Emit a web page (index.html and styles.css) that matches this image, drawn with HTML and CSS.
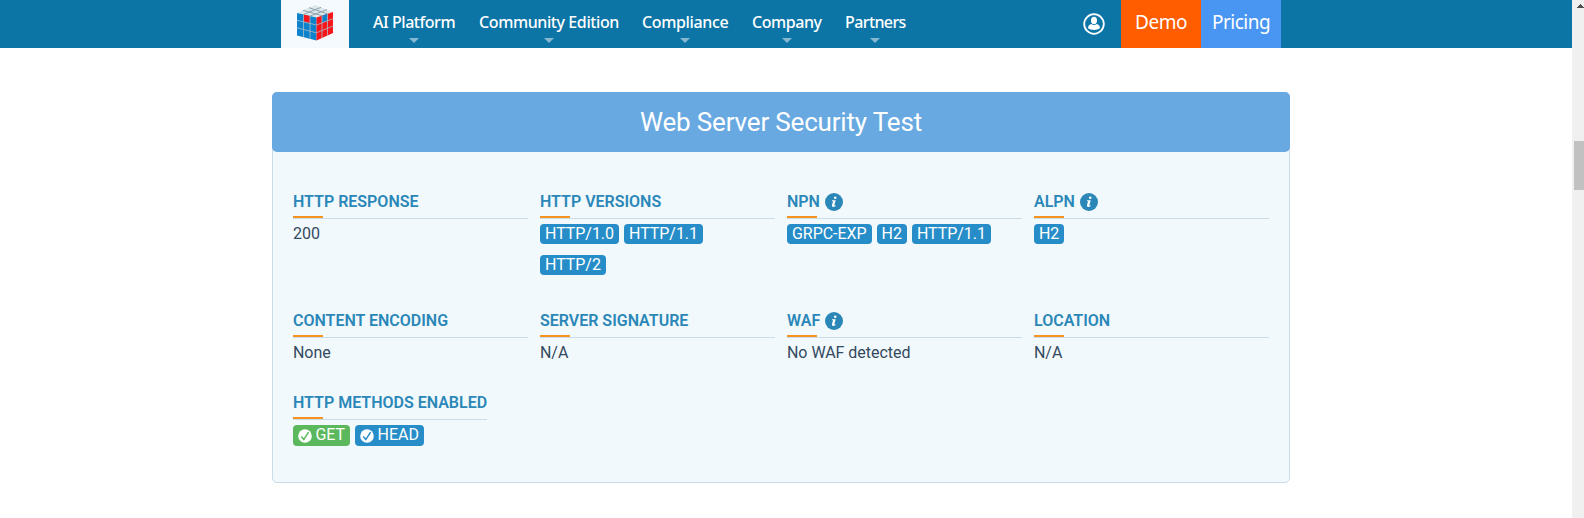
FILE: index.html
```html
<!DOCTYPE html>
<html lang="en">
<head>
<meta charset="utf-8">
<title>Web Server Security Test</title>
<link rel="stylesheet" href="styles.css">
</head>
<body>
<svg class="defs" width="0" height="0">
  <symbol id="info" viewBox="0 0 18 18"><circle cx="9" cy="9" r="9" fill="#2a87b7"/><circle cx="10.2" cy="4.8" r="1.3" fill="#fff"/><path d="M7.1 7.3H10.7L9.3 12.2Q9.2 12.8 10.7 12.2V13Q9.2 14 8 13.9Q6.6 13.7 7 12.1L8.1 8.3H6.9Z" fill="#fff"/></symbol>
  <symbol id="check" viewBox="0 0 14 14"><circle cx="7" cy="7" r="6.8" fill="#fff"/><path d="M3.3 7.6L5.8 10.6L10.6 3.2" fill="none" stroke="currentColor" stroke-width="1.5"/></symbol>
</svg>
<header class="topbar">
  <a class="logo">
    <svg width="38" height="37" viewBox="0 0 38 37">
      <path d="M1 8L19 0L37 7L20.5 12.5Z" fill="#dce8ec"/>
      <path d="M1 8L20.5 12.5V35.5L1 30.5Z" fill="#0c82cd"/>
      <path d="M20.5 12.5L37 7V28L20.5 35.5Z" fill="#f9151b"/>
      <path d="M7.5 9.5L14 11V18L7.5 16.5Z" fill="#f9151b"/>
      <path d="M26 10.7L31.5 8.8V15.5L26 17.7Z" fill="#0c82cd"/>
      <path d="M7 5.3L26 10.7M13 2.7L31.5 8.8M7.5 9.5L25 2.3M14 11L31 4.7" fill="none" stroke="#8fa3aa" stroke-width="1"/>
      <path d="M1 15.3L20.5 20L37 13.7M1 22.8L20.5 27.8L37 21M7.5 9.5V32M14 11V33.7M26 10.7V33M31.5 8.8V30.5" fill="none" stroke="#a9bcc5" stroke-width=".8"/>
    </svg>
  </a>
  <nav class="nav">
    <a class="nav-item platform">AI Platform</a>
    <a class="nav-item community">Community Edition</a>
    <a class="nav-item compliance">Compliance</a>
    <a class="nav-item company">Company</a>
    <a class="nav-item partners">Partners</a>
  </nav>
  <svg class="user" width="22" height="22" viewBox="0 0 22 22"><circle cx="11" cy="11" r="9.8" fill="none" stroke="#fff" stroke-width="1.8"/><ellipse cx="11" cy="7.5" rx="3" ry="3.7" fill="#fff"/><path d="M5 15.2Q5.2 11.6 8.5 11.1Q11 13.3 13.5 11.1Q16.8 11.6 17 15.2Q14.8 17 11 17Q7.2 17 5 15.2Z" fill="#fff"/></svg>
  <a class="action demo">Demo</a>
  <a class="action pricing">Pricing</a>
</header>
<main class="card">
  <h1 class="card-title">Web Server Security Test</h1>
  <div class="grid">
    <section><h2 class="label">HTTP RESPONSE</h2><div class="value">200</div></section>
    <section><h2 class="label">HTTP VERSIONS</h2><div class="value tags tall"><span class="tag">HTTP/1.0</span><span class="tag">HTTP/1.1</span><span class="tag">HTTP/2</span></div></section>
    <section><h2 class="label">NPN<svg class="info"><use href="#info"/></svg></h2><div class="value tags"><span class="tag">GRPC-EXP</span><span class="tag">H2</span><span class="tag">HTTP/1.1</span></div></section>
    <section><h2 class="label">ALPN<svg class="info"><use href="#info"/></svg></h2><div class="value tags"><span class="tag">H2</span></div></section>
    <section><h2 class="label">CONTENT ENCODING</h2><div class="value">None</div></section>
    <section><h2 class="label">SERVER SIGNATURE</h2><div class="value">N/A</div></section>
    <section><h2 class="label">WAF<svg class="info"><use href="#info"/></svg></h2><div class="value">No WAF detected</div></section>
    <section><h2 class="label">LOCATION</h2><div class="value">N/A</div></section>
    <section class="methods"><h2 class="label">HTTP METHODS ENABLED</h2><div class="value tags"><span class="tag method get"><svg class="check"><use href="#check"/></svg>GET</span><span class="tag method"><svg class="check"><use href="#check"/></svg>HEAD</span></div></section>
  </div>
</main>
<aside class="scrollbar"><svg class="scroll-up" width="7" height="4" viewBox="0 0 7 4" shape-rendering="crispEdges"><path d="M0 3H7V4H0ZM1 2H6V3H1ZM2 1H5V2H2ZM3 0H4V1H3Z" fill="#505050"/></svg><div class="thumb"></div></aside>
</body>
</html>
```
FILE: styles.css
```css
* { box-sizing: border-box; }
body { margin: 0; height: 518px; overflow: hidden; background: #fff; font: 16px/24px Roboto, sans-serif; color: #34495e; }
.defs { position: absolute; }
.topbar { display: flex; align-items: flex-start; width: 1572px; height: 48px; padding-left: 281px; background: #0c75a6; color: #fff; font-family: "Noto Sans", sans-serif; }
.logo { width: 68px; height: 48px; padding: 5px 0 0 15px; background: #f5fafe; }
.logo svg { display: block; }
.nav { display: flex; gap: 24px; width: 732px; padding-left: 24px; }
.nav-item { position: relative; height: 48px; font-size: 16px; font-weight: 500; line-height: 45px; white-space: nowrap; letter-spacing: -.45px; }
.nav-item::after { content: ""; position: absolute; left: 50%; top: 38px; margin-left: -5px; border: 5px solid transparent; border-top-color: #86b9d1; border-bottom: 0; }
.platform { width: 82px; }
.community { width: 139px; letter-spacing: -.4px; }
.compliance { width: 86px; letter-spacing: -.35px; }
.company { width: 69px; }
.partners { width: 60px; letter-spacing: -.6px; }
.user { width: 22px; margin: 13px -2px 0 2px; }
.action { width: 80px; height: 48px; text-align: center; font-size: 19px; line-height: 45px; letter-spacing: -.5px; }
.demo { margin-left: 18px; background: #ff5d00; }
.pricing { background: #4996f2; }
.card { width: 1018px; height: 391px; margin: 44px 0 0 272px; border: 1px solid #c8dde9; border-radius: 5px; background: #f1f9fd; }
.card-title { height: 60px; margin: -1px -1px 0; border-radius: 5px; background: #68a9e1; color: #fff; font-size: 26px; font-weight: 400; line-height: 60px; text-align: center; letter-spacing: -.18px; }
.grid { display: grid; grid-template-columns: repeat(4, 235px); column-gap: 12px; padding: 37px 0 0 20px; }
.label { position: relative; display: flex; height: 30px; margin: 0; border-bottom: 1px solid #c8dde9; color: #2a87b7; font-size: 16px; font-weight: 600; line-height: 26px; white-space: nowrap; }
.label::after { content: ""; position: absolute; left: 0; bottom: 0; width: 30px; height: 2px; background: #f7941d; }
.info { width: 18px; height: 18px; margin: 4px 0 0 5px; }
.value { min-height: 31px; margin-bottom: 21px; line-height: 29px; letter-spacing: -.04px; }
.tags { display: flex; flex-wrap: wrap; align-items: flex-start; align-content: flex-start; gap: 11px 5px; padding-top: 5px; }
.tall { height: 68px; padding-right: 10px; }
.tag { height: 20px; padding: 0 5px; border-radius: 4px; background: #268dc8; color: #fff; line-height: 19px; }
.methods { justify-self: start; }
.method { display: flex; height: 21px; line-height: 20px; }
.get { background: #5cb85c; color: #fff; }
.check { width: 14px; height: 14px; margin: 4px 3.5px 0 0; color: #268dc8; }
.get .check { color: #5cb85c; }
.scrollbar { position: absolute; top: 0; right: 0; width: 12px; height: 518px; padding-top: 4px; background: #f0f0f0; }
.scroll-up { display: block; margin-left: 5px; }
.thumb { width: 10px; height: 49px; margin: 133px 0 0 2px; background: #c1c1c1; }
```
